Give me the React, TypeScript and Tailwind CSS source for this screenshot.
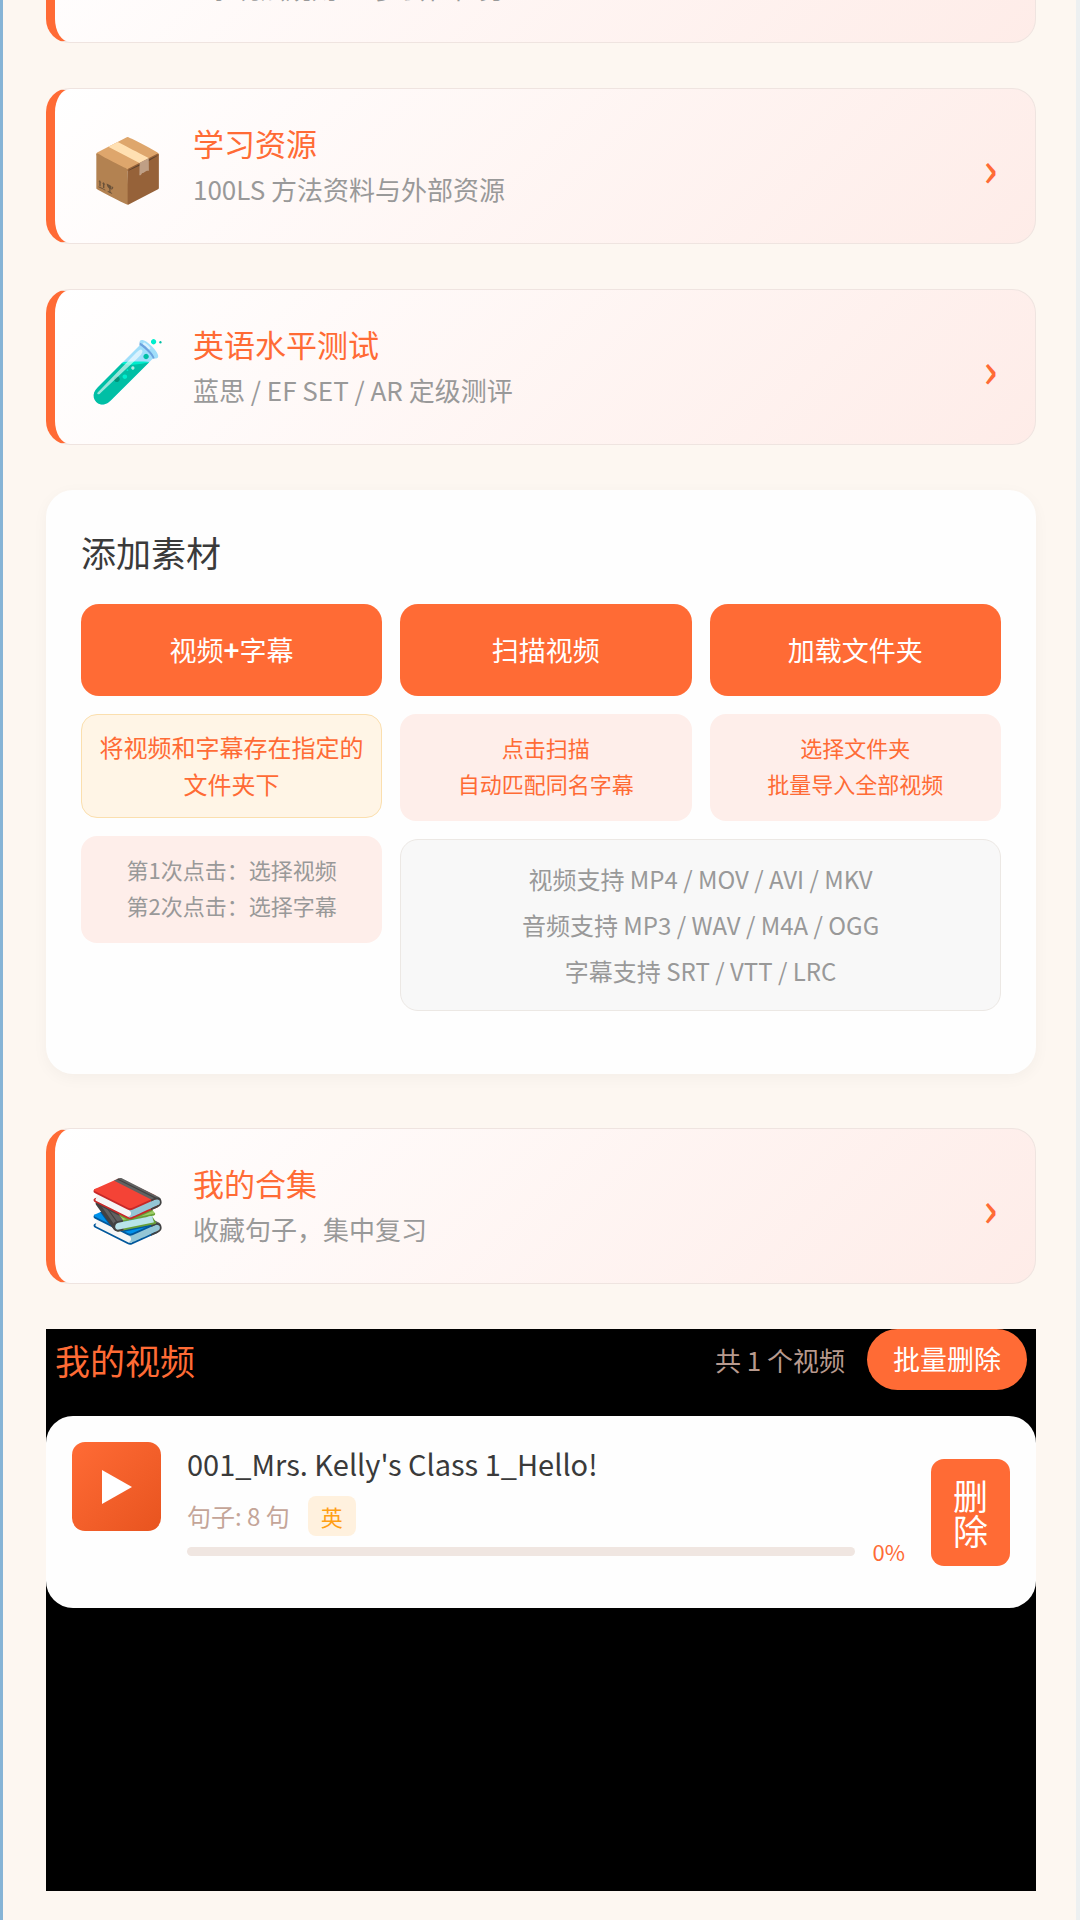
import { ReactNode } from "react";

interface EntryCardProps {
  icon: string;
  title: string;
  desc: string;
}

function EntryCard({ icon, title, desc }: EntryCardProps) {
  return (
    <button className="flex w-full items-center rounded-[24px] border border-l-[9px] border-[#efe4e0] border-l-[#ff6b35] bg-linear-135 from-white to-[#feece8] pt-[30px] pr-[37px] pb-[31px] text-left">
      <span className="flex w-[138px] shrink-0 justify-center pb-[2px] pl-[6px] text-[62px] leading-[70px]">{icon}</span>
      <span className="flex-1">
        <span className="block text-[31px] leading-[47px] text-[#ff6b35]">{title}</span>
        <span className="block text-[26px] leading-[46px] text-[#999]">{desc}</span>
      </span>
      <span className="text-[48px] leading-[48px] font-medium text-[#ff6b35]">›</span>
    </button>
  );
}

function MainButton({ children }: { children: ReactNode }) {
  return (
    <button className="h-[92px] w-full rounded-[18px] bg-[#ff6b35] text-[27px] text-white">{children}</button>
  );
}

function Hint({ lines, muted }: { lines: string[]; muted?: boolean }) {
  return (
    <div className={`rounded-2xl bg-[#feeeea] pt-[15px] pb-[20px] text-center text-[22px] leading-[36px] ${muted ? "text-[#999]" : "text-[#ff6b35]"}`}>
      {lines.map((l) => (
        <p key={l}>{l}</p>
      ))}
    </div>
  );
}

const formats = [
  "视频支持 MP4 / MOV / AVI / MKV",
  "音频支持 MP3 / WAV / M4A / OGG",
  "字幕支持 SRT / VTT / LRC",
];

const videos = [
  { id: 1, title: "001_Mrs. Kelly's Class 1_Hello!", sentences: 8, lang: "英", progress: 0 },
];

export default function App() {
  return (
    <div className="h-screen overflow-hidden border-r-4 border-l-[3px] border-l-[#86b4d6] border-r-[#edf0f1] bg-[#fdf7f1] font-['Noto_Sans_CJK_SC',sans-serif]">
      <main className="-mt-[113px] flex flex-col gap-[45px] pr-[40px] pl-[43px]">
        <EntryCard icon="📖" title="使用说明" desc="1系统法规则 · 多套任性务" />
        <EntryCard icon="📦" title="学习资源" desc="100LS 方法资料与外部资源" />
        <EntryCard icon="🧪" title="英语水平测试" desc="蓝思 / EF SET / AR 定级测评" />

        <section className="mb-[9px] rounded-[27px] bg-[#fefefe] px-[35px] pt-[36px] pb-[63px] shadow-[0_4px_16px_rgba(0,0,0,0.04)]">
          <h2 className="mb-[26px] text-[35px] leading-[52px] text-[#3a3a3a]">添加素材</h2>
          <div className="grid grid-cols-[31fr_30fr_30fr] items-start gap-[18px]">
            <div className="row-span-2 flex flex-col gap-[18px]">
              <MainButton>视频<b>+</b>字幕</MainButton>
              <p className="rounded-2xl border border-[#fbdfae] bg-[#fff5e6] px-3 pt-[13px] pb-[15px] text-center text-[24px] leading-[37px] text-[#ff6b35]">
                将视频和字幕存在指定的文件夹下
              </p>
              <Hint muted lines={["第1次点击：选择视频", "第2次点击：选择字幕"]} />
            </div>
            <div className="flex flex-col gap-[18px]">
              <MainButton>扫描视频</MainButton>
              <Hint lines={["点击扫描", "自动匹配同名字幕"]} />
            </div>
            <div className="flex flex-col gap-[18px]">
              <MainButton>加载文件夹</MainButton>
              <Hint lines={["选择文件夹", "批量导入全部视频"]} />
            </div>
            <div className="col-span-2 rounded-[18px] border border-[#ece8e4] bg-[#f8f8f8] py-4 text-center text-[24px] leading-[46px] text-[#999]">
              {formats.map((f) => (
                <p key={f}>{f}</p>
              ))}
            </div>
          </div>
        </section>

        <EntryCard icon="📚" title="我的合集" desc="收藏句子，集中复习" />

        <section className="min-h-[562px] bg-black">
          <div className="mb-[26px] flex items-center px-[9px]">
            <h2 className="flex-1 text-[35px] leading-[52px] text-[#ff6b35]">我的视频</h2>
            <span className="mr-[22px] text-[26px] text-[#b89a8e]">共 1 个视频</span>
            <button className="h-[61px] rounded-full bg-[#ff6b35] px-[26px] text-[27px] text-white">批量删除</button>
          </div>
          {videos.map((v) => (
            <div key={v.id} className="flex items-center gap-[26px] rounded-[27px] bg-[#fefefe] p-[26px]">
              <button aria-label="播放" className="flex size-[89px] shrink-0 items-center justify-center self-start rounded-[13px] bg-linear-135 from-[#ff6b35] to-[#e8541f]">
                <svg width="30" height="34" viewBox="0 0 30 34" fill="white">
                  <path d="M0 0L30 17L0 34Z" />
                </svg>
              </button>
              <div className="mb-4 flex-1">
                <h3 className="mb-[12px] text-[29px] leading-[42px] text-[#3a3a3a]">{v.title}</h3>
                <div className="flex items-center gap-[18px]">
                  <span className="text-[24px] leading-[40px] text-[#c4a598]">句子: {v.sentences} 句</span>
                  <span className="rounded-lg bg-[#fff1de] px-[13px] text-[22px] leading-[40px] text-[#ffa015]">{v.lang}</span>
                </div>
                <div className="flex items-center gap-[18px]">
                  <div className="h-[9px] flex-1 overflow-hidden rounded-full bg-[#f0e6e1]">
                    <div className="h-full bg-[#ff6b35]" style={{ width: `${v.progress}%` }} />
                  </div>
                  <span className="text-[22px] leading-[30px] text-[#ff6b35]">{v.progress}%</span>
                </div>
              </div>
              <button className="h-[107px] w-[79px] rounded-[13px] bg-[#ff6b35] px-[21px] text-[35px] leading-[35px] text-white">删除</button>
            </div>
          ))}
        </section>
      </main>
    </div>
  );
}
